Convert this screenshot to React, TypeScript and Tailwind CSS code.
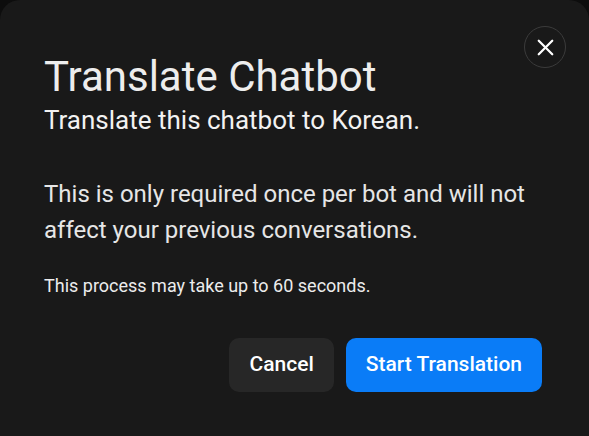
import { X } from "lucide-react";

const App = () => {
  return (
    <div className="w-full h-[436px] bg-[#0d0d0d] overflow-hidden" style={{ fontFamily: "Roboto, 'Liberation Sans', sans-serif" }}>
      <div className="relative h-full bg-[#191919] rounded-t-[20px] pl-[44px] pr-[47px] pt-[53px]">
        <button className="absolute top-[26px] right-[23px] w-[42px] h-[42px] rounded-full border border-[#3b3b3b] flex items-center justify-center text-white">
          <X className="w-[27px] h-[27px]" strokeWidth={2} />
        </button>

        <h1 className="text-[42px] leading-[48px] text-[#ededed] font-normal">Translate Chatbot</h1>
        <p className="mt-[3px] text-[26px] leading-[32px] text-[#f2f2f2]">Translate this chatbot to Korean.</p>

        <p className="mt-[40px] text-[24px] leading-[36px] text-[#e6e6e6]">
          This is only required once per bot and will not affect your previous conversations.
        </p>

        <p className="mt-[26px] text-[18px] leading-[24px] text-[#ececec]">This process may take up to 60 seconds.</p>

        <div className="mt-[40px] flex justify-end gap-[12px]">
          <button className="h-[54px] px-[20px] rounded-[10px] bg-[#272727] text-white text-[21px] font-medium">
            Cancel
          </button>
          <button className="h-[54px] px-[20px] rounded-[10px] bg-[#0a7cf7] text-white text-[21px] font-medium">
            Start Translation
          </button>
        </div>
      </div>
    </div>
  );
};

export default App;
